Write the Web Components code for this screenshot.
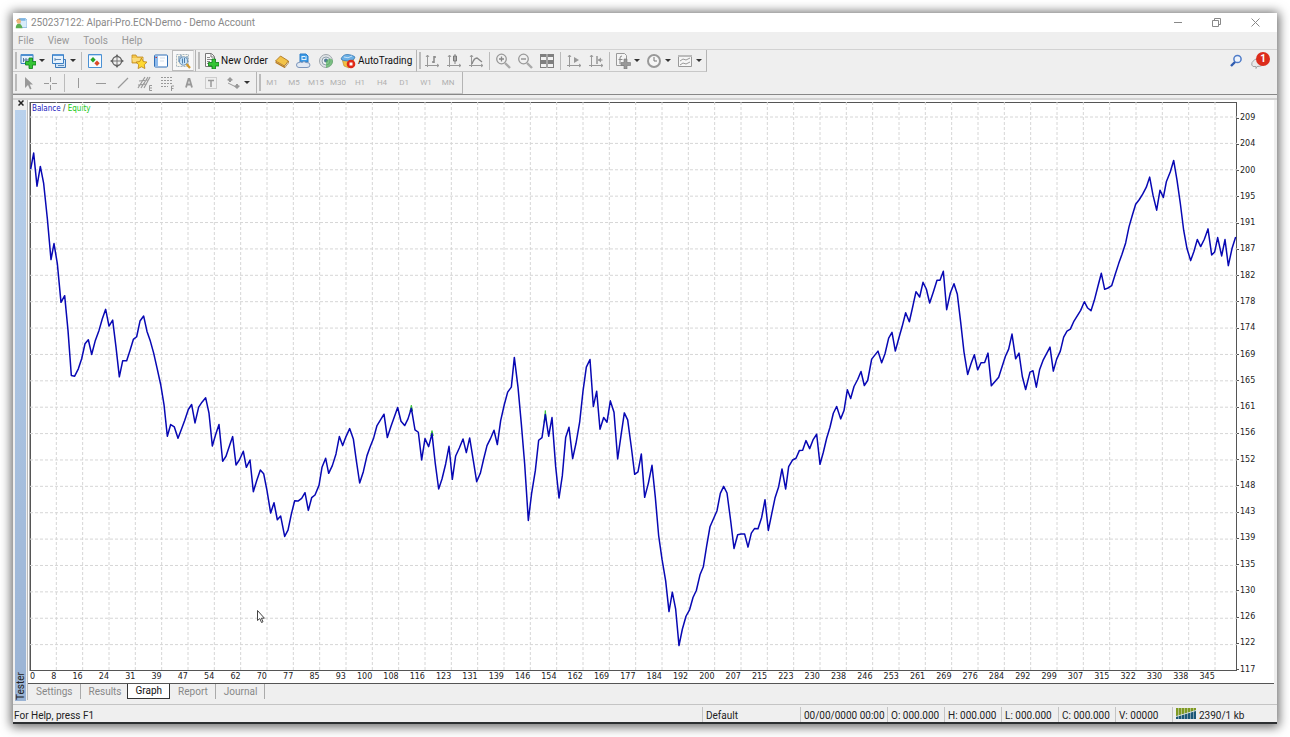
<!DOCTYPE html>
<html lang="en">
<head>
<meta charset="utf-8">
<title>250237122: Alpari-Pro.ECN-Demo - Demo Account</title>
<style>
    body {
        margin: 0;
        background: #fff;
        font: 10px/14px Roboto, "Open Sans", sans-serif;
        color: #222;
    }
</style>
</head>
<body>
<terminal-window>
    <title-bar slot="title">250237122: Alpari-Pro.ECN-Demo - Demo Account</title-bar>
    <menu-bar slot="menu" items="File,View,Tools,Help"></menu-bar>
    <tool-row slot="toolbar">
        <tool-group>
            <tool-button icon="new-chart" label="New chart" menu></tool-button>
            <tool-button icon="profiles" label="Profiles" menu></tool-button>
            <tool-separator></tool-separator>
            <tool-button icon="market" label="Market Watch"></tool-button>
            <tool-button icon="target" label="Data Window"></tool-button>
            <tool-button icon="navigator" label="Navigator"></tool-button>
            <tool-button icon="terminal" label="Terminal"></tool-button>
            <tool-button icon="tester" label="Strategy Tester" pressed></tool-button>
        </tool-group>
        <tool-group>
            <tool-button icon="order">New Order</tool-button>
            <tool-button icon="book" label="MetaEditor"></tool-button>
            <tool-button icon="cloud" label="Virtual hosting"></tool-button>
            <tool-button icon="signals" label="Signals"></tool-button>
            <tool-button icon="auto">AutoTrading</tool-button>
        </tool-group>
        <tool-group>
            <tool-button icon="bars" label="Bar Chart"></tool-button>
            <tool-button icon="candles" label="Candlesticks"></tool-button>
            <tool-button icon="line-chart" label="Line Chart"></tool-button>
            <tool-separator></tool-separator>
            <tool-button icon="zoom-in" label="Zoom In"></tool-button>
            <tool-button icon="zoom-out" label="Zoom Out"></tool-button>
            <tool-button icon="tile" label="Tile Windows"></tool-button>
            <tool-separator></tool-separator>
            <tool-button icon="scroll" label="Auto Scroll"></tool-button>
            <tool-button icon="shift" label="Chart Shift"></tool-button>
            <tool-separator></tool-separator>
            <tool-button icon="indicators" label="Indicators" menu></tool-button>
            <tool-button icon="clock" label="Periods" menu></tool-button>
            <tool-button icon="templates" label="Templates" menu></tool-button>
        </tool-group>
        <tool-button slot="end" icon="search" label="Search"></tool-button>
        <tool-button slot="end" icon="chat" label="Notifications" badge="1"></tool-button>
    </tool-row>
    <tool-row slot="toolbar">
        <tool-group wide>
            <tool-button icon="arrow" label="Cursor"></tool-button>
            <tool-button icon="cross" label="Crosshair"></tool-button>
            <tool-separator></tool-separator>
            <tool-button icon="vline" label="Vertical Line"></tool-button>
            <tool-button icon="hline" label="Horizontal Line"></tool-button>
            <tool-button icon="trend" label="Trendline"></tool-button>
            <tool-button icon="channel" label="Equidistant Channel"></tool-button>
            <tool-button icon="fibo" label="Fibonacci"></tool-button>
            <tool-button icon="text" label="Text"></tool-button>
            <tool-button icon="label" label="Text Label"></tool-button>
            <tool-button icon="arrows" label="Arrows" menu></tool-button>
        </tool-group>
        <tool-group wide>
            <tool-button period>M1</tool-button>
            <tool-button period>M5</tool-button>
            <tool-button period>M15</tool-button>
            <tool-button period>M30</tool-button>
            <tool-button period>H1</tool-button>
            <tool-button period>H4</tool-button>
            <tool-button period>D1</tool-button>
            <tool-button period>W1</tool-button>
            <tool-button period>MN</tool-button>
        </tool-group>
    </tool-row>
    <tester-panel name="Tester">
        <balance-chart></balance-chart>
        <panel-tabs slot="tabs" items="Settings,Results,Graph,Report,Journal" active="Graph"></panel-tabs>
    </tester-panel>
    <status-bar slot="status"></status-bar>
</terminal-window>

<script>
const AXES = '<path d="M3.500 2v12M1 12.500h14M2 4l1.500-2L5 4M13 11l2 1.500-2 1.500" fill="none" stroke="#999"/>';

/* 16x16 icons, keyed by name */
const ICONS = {
    'app': '<path d="M6 2h8l2 2v10H7z" fill="#d8ecfa" stroke="#7fb2dc"/><path d="M5 2h9v3H6z" fill="#7ab4e4"/><circle cx="5" cy="6" r="3" fill="#f1b77c"/><path d="M1 15q0-6 4-6t5 6z" fill="#5cae50"/><path d="M2 5q1-3 5-2" stroke="#c58a3d" fill="none"/>',
    'new-chart': '<path d="M1 1.500h12v9H1z" fill="#e4f0fc" stroke="#3b7fc4"/><path d="M1 1h12v2H1z" fill="#4d8fd0"/><path d="M3.500 5v4M3 7h6M6 5v3" stroke="#56779c" fill="none"/><path d="M9 5h3.500v3.500H16V12h-3.500v3.500H9V12H5.500V8.500H9z" fill="#35c435" stroke="#0c7c17" stroke-width=".8"/>',
    'profiles': '<path d="M4.500 6.500h10v8h-10z" fill="#cfe4f8" stroke="#3b78b8"/><path d="M1.500 1.500h11v9h-11z" fill="#e6f2fd" stroke="#3b7fc4"/><path d="M2 1h10v2H2z" fill="#5896d6"/><path d="M4 5v3M4 6.500h6M7 12.500h6" fill="none" stroke="#628bb4"/>',
    'market': '<path d="M1.500 1.500h13v13h-13z" fill="#f7fbff" stroke="#4b91d4"/><path d="M2 2h12v1H2z" fill="#bcd8f2"/><path d="M6 4l2.700 2.700L6 9.400 3.300 6.700z" fill="#28a428"/><path d="M10 7.500l2.700 2.700L10 12.900l-2.700-2.700z" fill="#dc4a28"/>',
    'target': '<circle cx="8" cy="8" r="4.500" fill="none" stroke="#666" stroke-width="1.300"/><path d="M8 2v12M2 8h12" stroke="#777"/><path d="M8 1l2 3H6zM8 15l2-3H6zM1 8l3-2v4zM15 8l-3-2v4z" fill="#666"/>',
    'navigator': '<path d="M1 2h4l1 2h6v6H1z" fill="#f4c64c" stroke="#c08a22" stroke-width=".8"/><path d="M1 5h11v4H2z" fill="#fbdc7c"/><path d="M10.500 5l1.700 3.500 3.800.6-2.700 2.700.6 3.700-3.400-1.700-3.400 1.700.6-3.700L5 9.100l3.800-.6z" fill="#ffd932" stroke="#b98213" stroke-width=".8"/>',
    'terminal': '<rect x="1.500" y="2" width="13" height="12" rx="1" fill="#fcfdff" stroke="#2f6fb8"/><path d="M2 2.500h3v11H2z" fill="#8db9ea"/><path d="M2.500 4.500h1.500" stroke="#c33"/><path d="M7 5h5M7 8h4" stroke="#d3dde8"/>',
    'tester': '<path d="M1.500 1.500h12v12h-12z" fill="#f8f6ec" stroke="#a8b6c0" stroke-dasharray="2 1"/><path d="M4 3v6M6 2v6M12 3v5" stroke="#4f7fae"/><circle cx="8.500" cy="8" r="4.200" fill="#bfe0fa" fill-opacity=".85" stroke="#6b8fb4"/><path d="M7.500 5.500v5M9.500 5v5" stroke="#4d7fae"/><path d="M11.500 11l3.500 4" stroke="#d29a2d" stroke-width="2.200"/>',
    'order': '<path d="M2.500.5h6l3 3v10h-9z" fill="#fafafa" stroke="#777"/><path d="M8 1v3h3" fill="none" stroke="#777"/><path d="M4 4.500h3M4 6.500h5M4 8.500h3M4 10.500h2" stroke="#888"/><path d="M9 6h3.500v3.500H16V13h-3.500v3H9v-3H5.500V9.500H9z" fill="#35c435" stroke="#0c7c17" stroke-width=".8"/>',
    'book': '<path d="M1.500 8l5-5 8 5-4 5z" fill="#f3c348" stroke="#a46c16" stroke-width=".8"/><path d="M1.500 8.500l9 5V15l-9-5z" fill="#b97a1c"/><path d="M10.500 13l4-5v2l-4 5z" fill="#e8e0c8" stroke="#a46c16" stroke-width=".6"/>',
    'cloud': '<path d="M4 1h6l2 2v6H4z" fill="#3c9be6" stroke="#2b7dc8"/><path d="M6 3v4M6 3.500h3M6 6.500h4M10 3v4" fill="none" stroke="#e3f2fe"/><path d="M3 14.500a2.500 2.500 0 010-5q2-1 3 0 2-2 4 0 4-.5 4 2.500 0 2.500-3 2.500z" fill="#e2e9f3" stroke="#7b95bb"/>',
    'signals': '<circle cx="8" cy="8" r="6.500" fill="#dfe3e6" stroke="#a0a7ad"/><circle cx="8" cy="8" r="4" fill="#eef1f3" stroke="#90a0ac"/><circle cx="8" cy="7.500" r="2" fill="#547a98"/><path d="M8 15V8q5-5 7 0 0 5-7 7z" fill="#52b05a" fill-opacity=".7"/>',
    'auto': '<path d="M2 6q6 3 12-1l-1 6-4 4-5-2z" fill="#f2c042" stroke="#bb8624" stroke-width=".6"/><path d="M1 6Q3 1 8 1.500T15 4q-1 4-7 4T1 6z" fill="#6ab0e6" stroke="#3372ae" stroke-width=".7"/><path d="M4 4q4 2 8-1" fill="none" stroke="#c6e2f7"/><circle cx="11" cy="11" r="4.300" fill="#e02818"/><path d="M9.500 9.500h3v3h-3z" fill="#fff"/>',
    'bars': AXES + '<path d="M10 3v7M8 9h2M10 4h2" fill="none" stroke="#888" stroke-width="1.500"/>',
    'candles': AXES + '<path d="M9 1v10" stroke="#888"/><path d="M7.500 3h3v5h-3z" fill="#aaa" stroke="#777"/>',
    'line-chart': AXES + '<path d="M4 11q2-6 5-6l5 4" fill="none" stroke="#888" stroke-width="1.300"/>',
    'zoom-in': '<circle cx="6.500" cy="6" r="4.800" fill="#f1f1f1" stroke="#999" stroke-width="1.300"/><path d="M4 6h5M6.500 3.500v5" stroke="#888" stroke-width="1.300"/><path d="M10 10l5 5" stroke="#aaa" stroke-width="2.400"/>',
    'zoom-out': '<circle cx="6.500" cy="6" r="4.800" fill="#f1f1f1" stroke="#999" stroke-width="1.300"/><path d="M4 6h5" stroke="#888" stroke-width="1.300"/><path d="M10 10l5 5" stroke="#aaa" stroke-width="2.400"/>',
    'tile': '<path d="M1 1h14v14H1z" fill="#808080"/><path d="M2 4h5v3H2zM9 4h5v3H9zM2 11h5v3H2zM9 11h5v3H9z" fill="#f2f2f2"/><path d="M8 1v14" stroke="#ccc"/>',
    'scroll': AXES + '<path d="M8 4l5 3-5 3z" fill="#999"/>',
    'shift': AXES + '<path d="M9 3v8" stroke="#888" stroke-width="1.300"/><path d="M14.500 7H10" stroke="#888"/><path d="M10 7l3-2.500v5z" fill="#999"/>',
    'indicators': '<path d="M1.500.5h8l2 2v10h-10z" fill="#f4f4f4" stroke="#999"/><path d="M5 11V5q0-2 2-2M3.500 6.500h4" fill="none" stroke="#888"/><path d="M9 6h3v3.500h3.500v3H12V16H9v-3.500H6v-3h3z" fill="#999" stroke="#777" stroke-width=".6"/>',
    'clock': '<circle cx="8" cy="8" r="6" fill="#f6f6f6" stroke="#999" stroke-width="2"/><path d="M8 4v4h3" fill="none" stroke="#777"/>',
    'templates': '<path d="M1.500 2.500h13v11h-13z" fill="#f6f6f6" stroke="#999"/><path d="M1 2h14v2H1z" fill="#bbb"/><path d="M3 8l3-2 3 1 4-2M3 12l3-2 3 1 4-2" fill="none" stroke="#999"/>',
    'search': '<circle cx="9.500" cy="6" r="3.600" fill="#eef4fd" stroke="#4f7cc8" stroke-width="1.500"/><path d="M7 9l-4 4" stroke="#2f5cb0" stroke-width="2.400"/>',
    'chat': '<path d="M3 13.500q-2-1-1-4 2-4 7-4l4 2q1 3-1 5-2 1-5 1l-1 2v-2z" fill="#e9e9e9" stroke="#a4a4a4"/>',
    'arrow': '<path d="M5 2v11l3-3 2 4.500 1.500-.8L9.800 9.500H13z" fill="#999"/>',
    'cross': '<path d="M8.500 2v5M8.500 10v5M2 8.500h5M10 8.500h5" stroke="#999"/>',
    'vline': '<path d="M7.500 3v10" stroke="#999"/>',
    'hline': '<path d="M3 8.500h10" stroke="#999"/>',
    'trend': '<path d="M3 13l10-10" stroke="#999" stroke-width="1.300"/>',
    'channel': '<path d="M1 13L8 2M4 13l7-11M7 13l6-11M2 6l10-1M1 10l9-1" stroke="#999" stroke-width="1.200"/><path d="M15 10.500h-2.500v5H15M12.500 13H15" fill="none" stroke="#999"/>',
    'fibo': '<path d="M2 2.500h12M2 5.500h12M2 8.500h12M2 11.500h7" stroke="#999" stroke-dasharray="2 1"/><path d="M12.500 16v-5H15M12.500 13.500h2" fill="none" stroke="#999"/>',
    'text': '<path d="M5 12.500L7.500 4h1L11 12.500M6 9.500h4" fill="none" stroke="#999" stroke-width="1.800"/>',
    'label': '<path d="M2.500 2.500h11v11h-11z" fill="none" stroke="#aaa" stroke-dasharray="1 1"/><path d="M5 5.500h6M8 5v7" stroke="#999" stroke-width="1.500"/>',
    'arrows': '<path d="M5 2l3 3-2 1v1H4V6L2 5zM12 14l-3-3 2-1V9h2v1l2 1z" fill="#999"/><path d="M3 8l8 4" fill="none" stroke="#999"/>',
    'traffic': '<path d="M0 1h20v6L0 11z" fill="#7f9a22"/><path d="M0 9L20 3v9H0z" fill="#1c5878"/><path d="M0 9.500L20 3.500" stroke="#dfe6d0"/><path d="M2.500 1v12M5.500 1v12M8.500 1v12M11.500 1v12M14.500 1v12M17.500 1v12" stroke="#efefef" stroke-opacity=".6" stroke-width=".8"/>'
};

const svgIcon = (name, width = 16) =>
    `<svg width="${width}" height="16" viewBox="0 0 ${width} 16" aria-hidden="true">${ICONS[name]}</svg>`;

/* Base class: builds an open shadow root from the element's styles and markup */
class BaseElement extends HTMLElement {
    connectedCallback() {
        if (this.shadowRoot) return;
        const template = document.createElement('template');
        template.innerHTML = `<style>
            :host, *, *::before, *::after { box-sizing: border-box; }
            button { font: inherit; color: inherit; border: 0; padding: 0; margin: 0; background: none; }
            svg { display: block; flex: none; }
            ${this.styles()}
        </style>${this.markup()}`;
        this.attachShadow({ mode: 'open' }).appendChild(template.content.cloneNode(true));
    }
    get items() {
        return (this.getAttribute('items') || '').split(',');
    }
    styles() { return ''; }
    markup() { return '<slot></slot>'; }
}

class TerminalWindow extends BaseElement {
    styles() {
        return /* css */ `
            :host { display: flex; min-height: 100vh; padding: 13px; }
            main {
                flex: 1;
                min-width: 0;
                display: flex;
                flex-direction: column;
                background: #efefef;
                border-bottom: 2px solid #2c2f31;
                box-shadow: 0 1px 10px 2px rgba(0, 0, 0, .6);
            }
            .tools { border-bottom: 1px solid #888; }
            ::slotted(tester-panel) { flex: 1; }
        `;
    }
    markup() {
        return `<main>
            <slot name="title"></slot>
            <slot name="menu"></slot>
            <div class="tools"><slot name="toolbar"></slot></div>
            <slot></slot>
            <slot name="status"></slot>
        </main>`;
    }
}

class TitleBar extends BaseElement {
    styles() {
        return /* css */ `
            :host { display: flex; align-items: center; height: 19px; padding: 0 2px; background: #fff; color: #888; }
            .title { flex: 1; padding-left: 4px; }
            .app { width: 12px; height: 12px; }
            button { width: 39px; height: 19px; display: grid; place-items: center; }
            button svg { fill: none; stroke: #888; }
        `;
    }
    markup() {
        return `<svg class="app" viewBox="0 0 16 16">${ICONS.app}</svg>
            <span class="title"><slot></slot></span>
            <button aria-label="Minimize"><svg width="9" height="9"><path d="M1 4.500h8"/></svg></button>
            <button aria-label="Restore"><svg width="9" height="9"><path d="M.5 2.500h6v6h-6zM2.500 2V.5h6v6H7"/></svg></button>
            <button aria-label="Close"><svg width="9" height="9"><path d="M.5.5l8 8M8.500.5l-8 8"/></svg></button>`;
    }
}

class MenuBar extends BaseElement {
    styles() {
        return /* css */ `
            :host { display: block; color: #999; border-bottom: 1px solid #d2d2d2; }
            nav { display: flex; gap: 14px; height: 17px; align-items: center; padding-left: 5px; }
        `;
    }
    markup() {
        return `<nav>${this.items.map(item => `<button>${item}</button>`).join('')}</nav>`;
    }
}

class ToolRow extends BaseElement {
    styles() {
        return /* css */ `
            :host { display: flex; height: 22px; }
            .end { display: flex; margin-left: auto; padding-right: 8px; }
        `;
    }
    markup() {
        return '<slot></slot><div class="end"><slot name="end"></slot></div>';
    }
}

class ToolGroup extends BaseElement {
    styles() {
        return /* css */ `
            :host {
                display: flex;
                padding: 0 1px 0 4px;
                border-right: 1px solid #b4b4b4;
                border-bottom: 1px solid #c8c8c8;
                background: linear-gradient(#bbb, #bbb) 2px 2px / 2px 17px no-repeat;
            }
            :host([wide]) { --separator: 7px; padding-right: 3px; }
        `;
    }
}

class ToolSeparator extends BaseElement {
    styles() {
        return /* css */ `
            :host {
                width: var(--separator, 5px);
                background: linear-gradient(#bbb, #bbb) center / 1px 18px no-repeat;
            }
        `;
    }
}

class ToolButton extends BaseElement {
    styles() {
        return /* css */ `
            :host { display: flex; color: #111; }
            button {
                position: relative;
                display: flex;
                align-items: center;
                justify-content: center;
                min-width: 22px;
                white-space: nowrap;
            }
            :host([menu]) button { width: 31px; gap: 3px; }
            .text { padding: 0 3px 0 1px; }
            svg + .text { padding-left: 2px; }
            :host(:not([label])) button { padding-left: 3px; }
            :host([pressed]) button { background: #f8f8f8; border: 1px solid #bbb; border-right-color: #ddd; }
            :host([period]) button { color: #b0b0b0; font-size: 8px; width: 22px; padding: 0; }
            :host([period]) .text { padding: 0; }
            i { border: 3px solid transparent; border-top-color: #333; border-bottom: 0; }
            .badge {
                position: absolute;
                left: 9px;
                top: 2px;
                width: 14px;
                height: 14px;
                border-radius: 50%;
                background: #dc2c1c;
                color: #fff;
                font-weight: 700;
                line-height: 14px;
            }
        `;
    }
    markup() {
        const icon = this.getAttribute('icon');
        const label = this.getAttribute('label');
        const badge = this.getAttribute('badge');
        return `<button ${label ? `aria-label="${label}"` : ''}>
            ${icon ? svgIcon(icon) : ''}
            ${label ? '' : '<span class="text"><slot></slot></span>'}
            ${this.hasAttribute('menu') ? '<i></i>' : ''}
            ${badge ? `<span class="badge">${badge}</span>` : ''}
        </button>`;
    }
}

class TesterPanel extends BaseElement {
    styles() {
        return /* css */ `
            :host { display: flex; margin-top: 3px; border-top: 2px solid #d2d2d2; min-height: 300px; }
            aside { width: 13px; padding: 0 0 3px 2px; display: flex; flex-direction: column; }
            .close { height: 10px; display: grid; place-items: start center; }
            .close svg { stroke: #222; stroke-width: 1.500; }
            .name {
                flex: 1;
                width: 11px;
                background: linear-gradient(#9ab3d4, #b9d1ec);
                writing-mode: vertical-rl;
                transform: rotate(180deg);
                line-height: 11px;
                padding-top: 1px;
            }
            .body {
                flex: 1;
                min-width: 0;
                display: flex;
                flex-direction: column;
                margin: 0 3px 4px 1px;
                border-left: 1px solid #bbb;
                background: #fff;
            }
            ::slotted(balance-chart) { flex: 1; }
        `;
    }
    markup() {
        return `<aside>
                <button class="close" aria-label="Close panel"><svg width="6" height="6"><path d="M.5.5l5 5M5.500.5l-5 5"/></svg></button>
                <div class="name">${this.getAttribute('name')}</div>
            </aside>
            <section class="body"><slot></slot><slot name="tabs"></slot></section>`;
    }
}

/* Balance curve in plot units (3 units per pixel at the default window size).
   Each chunk is an origin followed by its x,y pairs. */
const CURVE = [
    [-30, 84, '32,117 41,69 51,168 61,109 71,160 82,265 93,388 102,340 112,400 123,516 134,496 144,600 154,735 164,737 175,715 185,685 195,640 205,628 215,672 226,630 237,600 247,565 257,537 267,587 278,569 288,650 298,739 308,691 320,691 330,660 340,627 350,619 360,572 371,557 381,603 391,632 401,668 411,712 422,762 432,822 442,917 452,882 463,889 474,923 484,897 494,870 505,837 515,822 525,877 536,830 546,815 557,802 567,848 577,946 587,912 597,882 608,992 618,977 628,947 638,918 648,1003 658,988 670,962 679,1010 690,988 700,1083 710,1050 721,1018 731,1029 741,1080 752,1147 762,1116 772,1167 782,1156 794,1217 804,1198 814,1150 824,1110 834,1111 845,1103 855,1086 865,1139 875,1101 885,1093'],
    [750, 684, '117,464 126,410 137,383 146,428 157,405 168,370 178,318 188,345 198,318 209,294 220,325 229,390 239,457 250,423 261,375 270,350 281,322 291,285 312,251 322,321 333,287 353,231 363,272 374,285 384,265 394,233 405,298 415,305 425,388 435,324 446,348 456,309 466,400 476,475 486,445 497,400 507,347 517,446 527,376 538,352 549,325 559,366 569,322 580,390 590,453 601,428 611,385 621,345 631,325 642,299 652,342 662,270 673,222 683,185 694,170 703,81 714,170 724,280 734,400 745,569 755,487 766,420 776,329 786,321 796,252 806,317 816,261 827,408 837,502 847,435 857,321 867,290'],
    [1590, 714, '38,354 48,308 59,245 69,152 79,80 90,57 100,198 110,152 120,266 131,231 141,245 151,181 162,215 173,355 183,285 193,217 203,238 214,320 224,401 234,394 244,340 254,470 265,428 276,374 286,470 296,585 306,655 317,720 327,812 337,754 347,805 357,914 367,865 378,826 389,806 399,770 409,749 420,702 430,678 440,615 450,558 471,510 481,458 491,437 501,457 512,540 522,623 533,582 543,580 554,580'],
    [2010, 474, '144,859 154,817 164,803 174,804 185,770 195,717 205,809 215,760 225,712 236,678 246,625 257,685 266,618 278,598 288,593 298,570 308,569 318,540 329,564 339,538 350,521 360,611 370,575 380,533 390,500 400,458 410,438 422,475 432,450 442,388 452,414 462,378 473,357 483,333 493,375 503,360 515,296 534,272 545,307 555,280 566,233 576,216 586,272 596,235 606,200 617,157 628,184 638,140 648,94 659,110 669,66 679,86 689,128 700,95 711,60 720,60 730,33 740,148 751,98 762,70 772,102 782,185 792,275 803,342 813,310 823,283 833,328 843,307 854,306'],
    [2790, 114, '84,638 94,736 105,723 116,710 136,648 146,626 156,581 167,655 177,638 187,708 197,747 210,695 219,691 229,740 239,687 249,660 270,620 280,692 290,656 301,632 311,590 321,572 331,566 342,542 362,510 373,484 383,503 393,511 403,480 414,437 424,399 434,447 444,443 455,436 465,404 476,370 486,342 497,308 507,260 517,225 527,192 538,178 548,162 559,141 569,111 579,165 590,210 600,150 610,172 619,125 631,95 641,61 651,120 661,190 671,270 681,325 692,361 702,333 712,298 722,319 733,297 744,266 755,344 764,335 773,292 785,347 795,298 805,376 816,325 827,290']
];
const X_LABELS = [8, 16, 24, 31, 39, 47, 54, 62, 70, 77, 85, 93, 100, 108, 116, 123, 131, 139, 146, 154, 162, 169, 177, 184, 192, 200, 207, 215, 223, 230, 238, 246, 253, 261, 269, 276, 284, 292, 299, 307, 315, 322, 330, 338, 345];
const Y_LABELS = [209, 204, 200, 195, 191, 187, 182, 178, 174, 169, 165, 161, 156, 152, 148, 143, 139, 135, 130, 126, 122, 117];
const STEP = 79;

class BalanceChart extends BaseElement {
    styles() {
        return /* css */ `
            :host {
                display: grid;
                grid-template: minmax(0, 1fr) 12px / minmax(0, 1fr) 37px;
                padding: 2px 0 0 2px;
                border-bottom: 1px solid #555;
                font: 8px/12px "DejaVu Sans", Verdana, sans-serif;
                color: #222;
            }
            .plot { position: relative; display: grid; min-height: 0; box-shadow: inset 1px 1px #555, inset -1px -1px #555, -1px 0 #aaa; }
            .plot > * { grid-area: 1 / 1; }
            .plot > svg { width: 100%; height: 0; min-height: 100%; overflow: visible; }
            .plot > svg * { vector-effect: non-scaling-stroke; fill: none; }
            .grid { stroke: #d6d6d6; stroke-dasharray: 3 2; }
            .equity { stroke: #35c435; stroke-width: 1; }
            .balance { stroke: #0808b4; stroke-width: 1.500; stroke-linejoin: round; }
            .legend {
                justify-self: start;
                align-self: start;
                margin: 1px;
                padding: 0 1px;
                background: #fff;
                font-family: "DejaVu Sans Condensed", "DejaVu Sans", sans-serif;
                z-index: 1;
            }
            .legend b { font-weight: 400; color: #2020c0; }
            .legend em { font-style: normal; color: #20c820; }
            .x { display: flex; }
            .x div { flex: 79; width: 0; display: flex; justify-content: flex-end; white-space: nowrap; }
            .x div:first-child { justify-content: space-between; }
            .x::after { content: ""; flex: 66; }
            .y { grid-area: 1 / 2 / 3 / 3; display: flex; flex-direction: column; padding-top: 3px; }
            .y div { flex: 1; display: flex; align-items: center; gap: 1px; }
            .y div::before { content: ""; width: 2px; height: 1px; background: #555; }
            .plot > .pointer { position: absolute; left: 18.8%; top: 89.2%; width: 8px; height: 13px; min-height: 0; }
        `;
    }
    markup() {
        let grid = '';
        for (let x = STEP; x < 3600; x += STEP) grid += `M${x} 0V1704`;
        for (let y = 45; y < 1700; y += STEP) grid += `M0 ${y}H3621`;
        const points = CURVE.map(([ox, oy, list]) => list.split(' ').map(pair => {
            const [x, y] = pair.split(',').map(Number);
            return `${x + ox},${y + oy}`;
        }).join(' ')).join(' ');
        return `<div class="plot">
                <svg viewBox="0 0 3621 1704" preserveAspectRatio="none" role="img" aria-label="Balance graph">
                    <path class="grid" d="${grid}"/>
                    <path class="equity" d="M1542 960L1546 924L1550 960M1202 1000L1206 984L1210 1000M1140 926L1144 908L1148 926"/>
                    <polyline class="balance" points="${points}"/>
                </svg>
                <span class="legend"><b>Balance</b> / <em>Equity</em></span>
                <svg class="pointer" viewBox="0 0 8 13"><path d="M.5.5v10l2.300-2 1.700 4 1.500-.7-1.600-3.600h3z" style="fill:#fff;stroke:#444"/></svg>
            </div>
            <div class="x">${X_LABELS.map((n, i) => `<div>${i ? '' : '<span>0</span>'}<span>${n}</span></div>`).join('')}</div>
            <div class="y">${Y_LABELS.map(n => `<div>${n}</div>`).join('')}</div>`;
    }
}

class PanelTabs extends BaseElement {
    styles() {
        return /* css */ `
            :host { display: block; background: #efefef; color: #888; }
            div { display: flex; height: 16px; align-items: flex-start; }
            button { height: 15px; padding: 0 7px 0 8px; border-right: 1px solid #aaa; line-height: 14px; }
            .before { border-right-color: transparent; padding-right: 4px; }
            .active { background: #fff; color: #111; border: 1px solid #333; border-top: 0; }
        `;
    }
    markup() {
        const active = this.getAttribute('active');
        return `<div role="tablist">${this.items.map((item, i, all) => {
            const cls = item === active ? 'active' : all[i + 1] === active ? 'before' : '';
            return `<button role="tab" class="${cls}" aria-selected="${item === active}">${item}</button>`;
        }).join('')}</div>`;
    }
}

class StatusBar extends BaseElement {
    styles() {
        return /* css */ `
            :host { display: flex; height: 18px; padding-top: 2px; border-top: 1px solid #c4c4c4; line-height: 18px; }
            span { padding-left: 3px; border-left: 1px solid #c4c4c4; height: 15px; white-space: nowrap; }
            .help { flex: 1; padding-left: 1px; border: 0; }
            .profile { width: 98px; }
            .date { width: 87px; }
            .price { width: 57px; }
            .traffic { width: 105px; display: flex; gap: 3px; }
        `;
    }
    markup() {
        const prices = ['O: 000.000', 'H: 000.000', 'L: 000.000', 'C: 000.000', 'V: 00000'];
        return `<span class="help">For Help, press F1</span>
            <span class="profile">Default</span>
            <span class="date">00/00/0000 00:00</span>
            ${prices.map(text => `<span class="price">${text}</span>`).join('')}
            <span class="traffic">${svgIcon('traffic', 20)}2390/1 kb</span>`;
    }
}

customElements.define('terminal-window', TerminalWindow);
customElements.define('title-bar', TitleBar);
customElements.define('menu-bar', MenuBar);
customElements.define('tool-row', ToolRow);
customElements.define('tool-group', ToolGroup);
customElements.define('tool-separator', ToolSeparator);
customElements.define('tool-button', ToolButton);
customElements.define('tester-panel', TesterPanel);
customElements.define('balance-chart', BalanceChart);
customElements.define('panel-tabs', PanelTabs);
customElements.define('status-bar', StatusBar);
</script>
</body>
</html>
